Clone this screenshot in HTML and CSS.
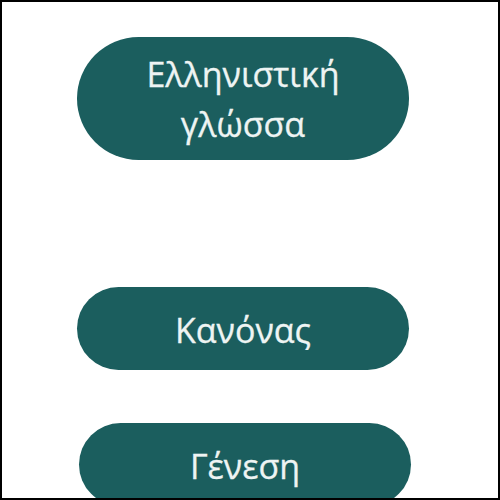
FILE: index.html
```html
<!DOCTYPE html>
<html lang="el">
<head>
<meta charset="utf-8">
<link rel="stylesheet" href="styles.css">
</head>
<body>
<div class="frame">
  <div class="btn btn-tall">Ελληνιστική<br>γλώσσα</div>
  <div class="btn btn-mid">Κανόνας</div>
  <div class="btn btn-last">Γένεση</div>
</div>
</body>
</html>
```
FILE: styles.css
```css
html, body {
  margin: 0;
  padding: 0;
  background: #ffffff;
}
.frame {
  box-sizing: border-box;
  width: 500px;
  height: 500px;
  border: 2px solid #000000;
  overflow: hidden;
  display: flex;
  flex-direction: column;
  padding-top: 35px;
  background: #ffffff;
}
.btn {
  box-sizing: border-box;
  flex: none;
  width: 332px;
  margin-left: 75px;
  background: #1b5e5e;
  color: #eef4f3;
  font-family: "Open Sans", "Noto Sans", sans-serif;
  font-size: 34px;
  line-height: 50px;
  text-align: center;
  display: flex;
  align-items: center;
  justify-content: center;
  border-radius: 62px;
  -webkit-text-stroke: 0.3px #eef4f3;
}
.btn-tall {
  height: 123px;
}
.btn-mid {
  height: 83px;
  margin-top: 127px;
  padding-top: 3px;
}
.btn-last {
  height: 83px;
  margin-top: 53px;
  margin-left: 77px;
  padding-top: 3px;
}
```
